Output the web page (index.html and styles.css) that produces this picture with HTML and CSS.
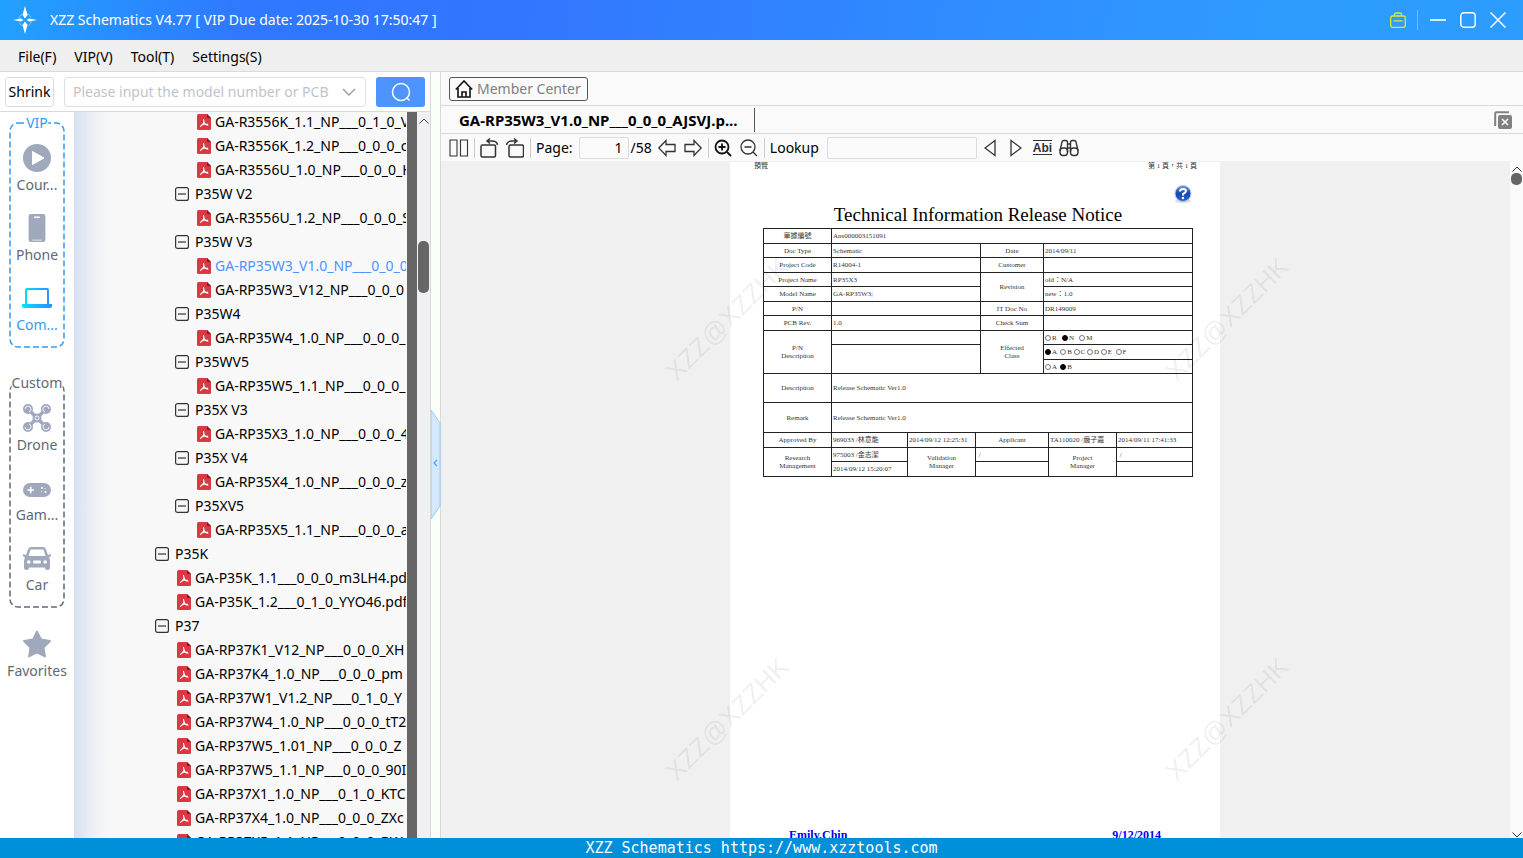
FILE: index.html
```html
<!DOCTYPE html>
<html lang="en">
<head>
<meta charset="utf-8">
<title>XZZ Schematics</title>
<link rel="stylesheet" href="styles.css">
</head>
<body>
<svg class="defs" aria-hidden="true">
  <symbol id="pdf" viewBox="0 0 14 16">
    <path d="M1.500 0H10L14 4V14.500Q14 16 12.500 16H1.500Q0 16 0 14.500V1.500Q0 0 1.500 0Z" fill="#d73a42"/>
    <path d="M10 0L14 4H11Q10 4 10 3Z" fill="#8e1219"/>
    <path d="M6.500 5.500C7.800 8 7 10 3.500 12.300M6.800 8C7.500 10 9 11 11 11M4.500 11.300C6 10.300 8.500 9.800 10.500 10.300" fill="none" stroke="#fff" stroke-width="1.100" stroke-linecap="round"/>
  </symbol>
  <symbol id="minus" viewBox="0 0 14 14">
    <rect x="0.600" y="0.600" width="12.800" height="12.800" rx="2" fill="none" stroke="#333" stroke-width="1.200"/>
    <path d="M3 7H11" stroke="#333" stroke-width="1.200"/>
  </symbol>
</svg>
<div class="app">
  <header class="titlebar">
    <svg class="logo" viewBox="0 0 24 28">
      <circle cx="12" cy="14" r="6.500" fill="none" stroke="#7fc8ff" stroke-width="1" stroke-dasharray="7 3"/>
      <path d="M12 0L14.500 9L12 12.500L9.500 9ZM12 28L14.500 19L12 15.500L9.500 19ZM0 14L8 12.500L10.500 14L8 15.500ZM24 14L16 12.500L13.500 14L16 15.500Z" fill="#fff"/>
    </svg>
    <h1 class="title">XZZ Schematics V4.77 [ VIP Due date: 2025-10-30 17:50:47 ]</h1>
    <div class="window-buttons">
      <button class="win bag" aria-label="Store"><svg viewBox="0 0 16 16" fill="none" stroke="#e2e532" stroke-width="1.300"><rect x="0.700" y="4" width="14.600" height="11.300" rx="2"/><path d="M4.500 4V2.700Q4.500 1 6 1H10Q11.500 1 11.500 2.700V4M3.500 8.800H12.500"/></svg></button>
      <button class="win" aria-label="Minimize"><svg viewBox="0 0 16 16"><path d="M0 8H16" stroke="#fff" stroke-width="1.600"/></svg></button>
      <button class="win" aria-label="Maximize"><svg viewBox="0 0 16 16"><rect x="0.800" y="0.800" width="14.400" height="14.400" rx="3" fill="none" stroke="#fff" stroke-width="1.400"/></svg></button>
      <button class="win" aria-label="Close"><svg viewBox="0 0 16 16"><path d="M0.500 0.500L15.500 15.500M15.500 0.500L0.500 15.500" stroke="#fff" stroke-width="1.500"/></svg></button>
    </div>
  </header>

  <nav class="menubar">
    <button>File(F)</button><button>VIP(V)</button><button>Tool(T)</button><button>Settings(S)</button>
  </nav>

  <main class="body">
    <section class="left">
      <div class="searchbar">
        <button class="shrink">Shrink</button>
        <label class="combo">
          <input type="text" placeholder="Please input the model number or PCB" aria-label="Model number">
          <svg viewBox="0 0 14 8"><path d="M1 1L7 7L13 1" fill="none" stroke="#999ca3" stroke-width="1.400"/></svg>
        </label>
        <button class="search" aria-label="Search"><svg viewBox="0 0 20 20" fill="none" stroke="#fff" stroke-width="1.500"><circle cx="10" cy="10" r="8.500"/><path d="M15.500 15.500L18.500 18.500"/></svg></button>
      </div>
      <div class="left-body">
        <nav class="sidebar">
          <div class="group vip">
            <svg class="frame"><rect x="1" y="1" rx="8"/></svg>
            <span class="legend">VIP</span>
            <button class="side"><svg viewBox="0 0 28 28"><circle cx="14" cy="14" r="14" fill="#a0a8bc"/><path d="M9.500 7.500V20.500L21 14Z" fill="#fff" stroke="#fff" stroke-linejoin="round"/></svg>Cour...</button>
            <button class="side"><svg viewBox="0 0 28 30"><rect x="5" y="0" width="18" height="30" rx="2.500" fill="#a0a8bc"/><path d="M11.500 3.500H16.500" stroke="#fff" stroke-width="1.800" stroke-linecap="round"/><path d="M9 28H19" stroke="#fff" stroke-width="0.800"/></svg>Phone</button>
            <button class="side active"><svg viewBox="0 0 30 20"><defs><linearGradient id="lap"><stop offset="0" stop-color="#00e5ff"/><stop offset="1" stop-color="#2f8bff"/></linearGradient></defs><path fill-rule="evenodd" d="M5 0H25Q27 0 27 2V16H30V18Q30 20 28 20H2Q0 20 0 18V16H3V2Q3 0 5 0ZM5 2V16H25V2Z" fill="url(#lap)"/></svg>Com...</button>
          </div>
          <div class="group custom">
            <svg class="frame"><rect x="1" y="1" rx="8"/></svg>
            <span class="legend">Custom</span>
            <button class="side"><svg viewBox="0 0 28 28"><g fill="#a0a8bc"><circle cx="5" cy="5" r="5"/><circle cx="23" cy="5" r="5"/><circle cx="5" cy="23" r="5"/><circle cx="23" cy="23" r="5"/></g><path d="M5 5L23 23M23 5L5 23" stroke="#a0a8bc" stroke-width="3.500"/><circle cx="14" cy="14" r="4.500" fill="#a0a8bc"/><g fill="none" stroke="#fff" stroke-width="0.900"><path d="M2 5A3 3 0 1 1 6 8M26 5A3 3 0 1 0 22 8M2 23A3 3 0 1 0 6 20M26 23A3 3 0 1 1 22 20"/><circle cx="14" cy="14" r="2"/></g></svg>Drone</button>
            <button class="side"><svg viewBox="0 0 28 28"><rect y="9" width="28" height="14" rx="7" fill="#a0a8bc"/><path d="M4.500 16H11M7.750 12.750V19.250" stroke="#fff" stroke-width="1.700"/><g fill="#fff"><circle cx="19" cy="14" r="1"/><circle cx="22.500" cy="18" r="1"/><circle cx="18.500" cy="17.500" r="0.600"/><circle cx="22" cy="14.500" r="0.600"/></g></svg>Gam...</button>
            <button class="side"><svg viewBox="0 0 28 28"><path fill-rule="evenodd" d="M8 3H20Q22 3 22.800 5L25 11L28 10V12L26 13.500Q27 14.500 27 17V24Q27 26 24.500 26Q22 26 22 23.500H6Q6 26 3.500 26Q1 26 1 24V17Q1 14.500 2 13.500L0 12V10L3 11L5.200 5Q6 3 8 3ZM7.500 5.500L5.500 12H22.500L20.500 5.500Z" fill="#a0a8bc"/><g fill="#fff"><circle cx="5.800" cy="18" r="1.800"/><circle cx="22.200" cy="18" r="1.800"/><rect x="10" y="16.500" width="8" height="3" rx="1"/></g></svg>Car</button>
          </div>
          <button class="side favorites"><svg viewBox="0 0 28 28"><path d="M14 1.500L18 9.500L27 11L20.500 17.500L22 26.500L14 22.500L6 26.500L7.500 17.500L1 11L10 9.500Z" fill="#a0a8bc" stroke="#a0a8bc" stroke-width="1.800" stroke-linejoin="round"/></svg>Favorites</button>
        </nav>
        <ul class="tree">
          <li class="file deep"><svg><use href="#pdf"/></svg>GA-R3556K_1.1_NP___0_1_0_V</li>
          <li class="file deep"><svg><use href="#pdf"/></svg>GA-R3556K_1.2_NP___0_0_0_c</li>
          <li class="file deep"><svg><use href="#pdf"/></svg>GA-R3556U_1.0_NP___0_0_0_H</li>
          <li class="dir deep"><svg><use href="#minus"/></svg>P35W V2</li>
          <li class="file deep"><svg><use href="#pdf"/></svg>GA-R3556U_1.2_NP___0_0_0_S</li>
          <li class="dir deep"><svg><use href="#minus"/></svg>P35W V3</li>
          <li class="file deep current"><svg><use href="#pdf"/></svg>GA-RP35W3_V1.0_NP___0_0_0</li>
          <li class="file deep"><svg><use href="#pdf"/></svg>GA-RP35W3_V12_NP___0_0_0</li>
          <li class="dir deep"><svg><use href="#minus"/></svg>P35W4</li>
          <li class="file deep"><svg><use href="#pdf"/></svg>GA-RP35W4_1.0_NP___0_0_0_</li>
          <li class="dir deep"><svg><use href="#minus"/></svg>P35WV5</li>
          <li class="file deep"><svg><use href="#pdf"/></svg>GA-RP35W5_1.1_NP___0_0_0_</li>
          <li class="dir deep"><svg><use href="#minus"/></svg>P35X V3</li>
          <li class="file deep"><svg><use href="#pdf"/></svg>GA-RP35X3_1.0_NP___0_0_0_4</li>
          <li class="dir deep"><svg><use href="#minus"/></svg>P35X V4</li>
          <li class="file deep"><svg><use href="#pdf"/></svg>GA-RP35X4_1.0_NP___0_0_0_z</li>
          <li class="dir deep"><svg><use href="#minus"/></svg>P35XV5</li>
          <li class="file deep"><svg><use href="#pdf"/></svg>GA-RP35X5_1.1_NP___0_0_0_a</li>
          <li class="dir"><svg><use href="#minus"/></svg>P35K</li>
          <li class="file"><svg><use href="#pdf"/></svg>GA-P35K_1.1___0_0_0_m3LH4.pd</li>
          <li class="file"><svg><use href="#pdf"/></svg>GA-P35K_1.2___0_1_0_YYO46.pdf</li>
          <li class="dir"><svg><use href="#minus"/></svg>P37</li>
          <li class="file"><svg><use href="#pdf"/></svg>GA-RP37K1_V12_NP___0_0_0_XH</li>
          <li class="file"><svg><use href="#pdf"/></svg>GA-RP37K4_1.0_NP___0_0_0_pm</li>
          <li class="file"><svg><use href="#pdf"/></svg>GA-RP37W1_V1.2_NP___0_1_0_Y</li>
          <li class="file"><svg><use href="#pdf"/></svg>GA-RP37W4_1.0_NP___0_0_0_tT2</li>
          <li class="file"><svg><use href="#pdf"/></svg>GA-RP37W5_1.01_NP___0_0_0_Z</li>
          <li class="file"><svg><use href="#pdf"/></svg>GA-RP37W5_1.1_NP___0_0_0_90I</li>
          <li class="file"><svg><use href="#pdf"/></svg>GA-RP37X1_1.0_NP___0_1_0_KTC</li>
          <li class="file"><svg><use href="#pdf"/></svg>GA-RP37X4_1.0_NP___0_0_0_ZXc</li>
          <li class="file"><svg><use href="#pdf"/></svg>GA-RP37X5_1.1_NP___0_0_0_BW</li>
        </ul>
        <div class="strip"></div>
        <div class="scroll">
          <svg class="arrow" viewBox="0 0 10 6"><path d="M0.500 5.500L5 1L9.500 5.500" fill="none" stroke="#444"/></svg>
          <div class="thumb"></div>
        </div>
      </div>
    </section>

    <div class="splitter">
      <button class="collapse" aria-label="Collapse panel"><svg viewBox="0 0 10 110"><path d="M0 0L9 13V96L0 109Z" fill="#d4e9fd" stroke="#90caf9"/><path d="M6 50L3 53L6 56" fill="none" stroke="#4da3f5" stroke-width="1.200"/></svg></button>
    </div>

    <section class="right">
      <div class="top-row">
        <button class="member"><svg viewBox="0 0 18 18" fill="none" stroke="#111" stroke-width="1.600"><path d="M0.800 9.500L9 1L17.200 9.500M3 8V17H15V8M7 17V12H11V17"/></svg>Member Center</button>
      </div>
      <div class="tab-row">
        <button class="tab">GA-RP35W3_V1.0_NP___0_0_0_AJSVJ.p...</button>
        <button class="close-all" aria-label="Close all"><svg viewBox="0 0 18 18"><path d="M1.200 15V2.500Q1.200 1.200 2.500 1.200H15" fill="none" stroke="#808080" stroke-width="2"/><rect x="4" y="4" width="14" height="14" rx="2" fill="#808080"/><path d="M8 8L14 14M14 8L8 14" stroke="#fff" stroke-width="1.600"/></svg></button>
      </div>
      <div class="toolbar">
        <button class="tool two" aria-label="Two pages"><svg viewBox="0 0 20 18" fill="none" stroke="#333" stroke-width="1.100"><path d="M1 1H8V17H1ZM11.500 1H18.500V17H11.500Z"/></svg></button>
        <span class="sep"></span>
        <button class="tool" aria-label="Rotate left"><svg class="rot" viewBox="0 0 18 20" fill="none" stroke="#333" stroke-width="1.500"><rect x="1" y="7" width="14.500" height="12" rx="1.500"/><path d="M17.500 7Q17 3 12 3H7M10 0.500L7 3L10 5.500"/></svg></button>
        <button class="tool" aria-label="Rotate right"><svg class="rot" viewBox="0 0 18 20" fill="none" stroke="#333" stroke-width="1.500"><rect x="3" y="7" width="14.500" height="12" rx="1.500"/><path d="M0.500 7Q1 3 6 3H11M8 0.500L11 3L8 5.500"/></svg></button>
        <span class="sep"></span>
        <label class="page-label" for="pg">Page:</label>
        <input id="pg" class="page-input" type="text" value="1">
        <span class="total">/58</span>
        <button class="tool" aria-label="Previous page"><svg viewBox="0 0 18 18" fill="none" stroke="#333" stroke-width="1.300"><path d="M0.800 9L8 1.500V5.500H17V12.500H8V16.500Z"/></svg></button>
        <button class="tool" aria-label="Next page"><svg viewBox="0 0 18 18" fill="none" stroke="#333" stroke-width="1.300"><path d="M17.200 9L10 1.500V5.500H1V12.500H10V16.500Z"/></svg></button>
        <span class="sep"></span>
        <button class="tool" aria-label="Zoom in"><svg viewBox="0 0 18 18" fill="none" stroke="#111" stroke-width="1.800"><circle cx="8" cy="8" r="6.500"/><path d="M13 13L17 17M4.500 8H11.500M8 4.500V11.500"/></svg></button>
        <button class="tool" aria-label="Zoom out"><svg viewBox="0 0 18 18" fill="none" stroke="#333" stroke-width="1.300"><circle cx="8" cy="8" r="7"/><path d="M13 13L17 17M4.500 8H11.500"/></svg></button>
        <span class="sep"></span>
        <label for="look">Lookup</label>
        <input id="look" class="look-input" type="text">
        <button class="tool small" aria-label="Find previous"><svg viewBox="0 0 12 18" fill="none" stroke="#333" stroke-width="1.300"><path d="M11 1.500V16.500L1 9Z"/></svg></button>
        <button class="tool small" aria-label="Find next"><svg viewBox="0 0 12 18" fill="none" stroke="#333" stroke-width="1.300"><path d="M1 1.500V16.500L11 9Z"/></svg></button>
        <button class="tool abi">Abi</button>
        <button class="tool" aria-label="Find"><svg class="bino" viewBox="0 0 20 18" fill="none" stroke="#333" stroke-width="1.400"><path d="M1 12L3 3Q3.200 1.500 5 1.500H6.500Q8.500 1.500 8.500 3.500V13M19 12L17 3Q16.800 1.500 15 1.500H13.500Q11.500 1.500 11.500 3.500V13M8.500 5H11.500M8.500 9H11.500"/><rect x="1" y="9" width="7.500" height="7.500" rx="3"/><rect x="11.500" y="9" width="7.500" height="7.500" rx="3"/></svg></button>
      </div>
      <div class="viewer">
        <div class="canvas">
          <article class="sheet">
            <div class="sheet-head"><span>預覽</span><span>第 1 頁，共 1 頁</span></div>
            <svg class="help" viewBox="0 0 20 20"><defs><linearGradient id="hb" x2="0" y2="1"><stop offset="0" stop-color="#6d95e0"/><stop offset="0.500" stop-color="#1646b0"/><stop offset="1" stop-color="#2a66d8"/></linearGradient></defs><ellipse cx="10" cy="17" rx="8" ry="2" fill="#ddd"/><circle cx="10" cy="9.500" r="8" fill="url(#hb)" stroke="#b9c8e4"/><path d="M7 7.500Q7 5 10 5Q13 5 13 7Q13 8.500 10 10V11.500" fill="none" stroke="#fff" stroke-width="2"/><circle cx="10" cy="14" r="1.200" fill="#fff"/></svg>
            <h2>Technical Information Release Notice</h2>
            <table class="info">
              <colgroup><col class="c-name"><col><col class="c-mid"><col class="c-val"></colgroup>
              <tr><th>單據編號</th><td colspan="3">Ans000003151091</td></tr>
              <tr><th>Doc Type</th><td>Schematic</td><th>Date</th><td>2014/09/11</td></tr>
              <tr><th>Project Code</th><td>R14004-1</td><th>Customer</th><td></td></tr>
              <tr><th>Project Name</th><td>RP35X3</td><th rowspan="2">Revision</th><td>old：N/A</td></tr>
              <tr><th>Model Name</th><td>GA-RP35W3;</td><td>new：1.0</td></tr>
              <tr><th>P/N</th><td></td><th>IT Doc No</th><td>DR149009</td></tr>
              <tr><th>PCB Rev.</th><td>1.0</td><th>Check Sum</th><td></td></tr>
              <tr><th rowspan="3">P/N<br>Description</th><td></td><th rowspan="3">Effected<br>Class</th><td class="opts"><i></i>R &nbsp; <i class="on"></i>N &nbsp; <i></i>M</td></tr>
              <tr><td rowspan="2"></td><td class="opts"><i class="on"></i>A &nbsp;<i></i>B <i></i>C <i></i>D <i></i>E &nbsp;<i></i>F</td></tr>
              <tr><td class="opts"><i></i>A &nbsp;<i class="on"></i>B</td></tr>
              <tr class="tall"><th>Description</th><td colspan="3">Release Schematic Ver1.0</td></tr>
              <tr class="tall"><th>Remark</th><td colspan="3">Release Schematic Ver1.0</td></tr>
            </table>
            <table class="info sign">
              <colgroup><col class="c-name"><col class="c-date"><col class="c-name"><col><col class="c-name"><col class="c-date"></colgroup>
              <tr><th>Approved By</th><td>969033 /林意能</td><td>2014/09/12 12:25:31</td><th>Applicant</th><td>TA110020 /嚴子嘉</td><td>2014/09/11 17:41:33</td></tr>
              <tr><th rowspan="2">Research<br>Management</th><td>975003 /金志潔</td><th rowspan="2">Validation<br>Manager</th><td>&nbsp;/</td><th rowspan="2">Project<br>Manager</th><td>&nbsp;/</td></tr>
              <tr><td>2014/09/12 15:20:07</td><td></td><td></td></tr>
            </table>
            <div class="sheet-foot"><span>Emily.Chin</span><span>9/12/2014</span></div>
          </article>
          <span class="mark m1">XZZ@XZZHK</span>
          <span class="mark m2">XZZ@XZZHK</span>
          <span class="mark m3">XZZ@XZZHK</span>
          <span class="mark m4">XZZ@XZZHK</span>
        </div>
        <div class="vscroll">
          <svg class="arrow" viewBox="0 0 10 6"><path d="M0.500 5.500L5 1L9.500 5.500" fill="none" stroke="#333"/></svg>
          <div class="knob"></div>
          <svg class="arrow down" viewBox="0 0 10 6"><path d="M0.500 0.500L5 5L9.500 0.500" fill="none" stroke="#333"/></svg>
        </div>
      </div>
    </section>
  </main>
  <footer class="footer">XZZ Schematics https://www.xzztools.com</footer>
</div>
</body>
</html>
```

FILE: styles.css
```css
* { box-sizing: border-box; }
body { margin: 0; font: 14px/20px "Noto Sans", "Noto Sans CJK SC", sans-serif; color: #000; }
button, input { font: inherit; color: inherit; }
button { margin: 0; padding: 0; border: 0; background: none; }
.defs { position: absolute; width: 0; height: 0; }
.app { display: flex; flex-direction: column; height: 100vh; overflow: hidden; }

.titlebar { flex: none; height: 40px; display: flex; align-items: center; padding: 0 17px 0 13px; background: linear-gradient(100deg, #21a2ff 0, #2f78ff 240px, #3275ff 500px, #2e9bff 1250px, #2b9dff 100%); color: #fff; }
.logo { width: 24px; height: 28px; margin-right: 13px; }
.title { margin: 0; font-size: 14px; font-weight: 400; flex: 1; }
.window-buttons { display: flex; align-items: center; gap: 14px; }
.win { display: flex; }
.win svg { width: 16px; height: 16px; }
.bag { padding-right: 11px; margin-right: -2px; border-right: 1px solid #6fb8ff; height: 20px; align-items: center; }

.menubar { flex: none; height: 32px; display: flex; gap: 18px; padding: 2px 18px 0; background: #efefef; border-bottom: 1px solid #d9d9d9; }

.body { flex: 1; min-height: 0; display: flex; }
.left { flex: none; width: 430px; display: flex; flex-direction: column; background: #fff; }
.searchbar { flex: none; height: 40px; display: flex; align-items: center; padding: 0 5px; border-bottom: 1px solid #d9d9d9; }
.shrink { width: 49px; height: 30px; border: 1px solid #dcdcdc; border-radius: 3px; margin-right: 10px; background: #fff; }
.combo { flex: 1; height: 30px; display: flex; align-items: center; border: 1px solid #dcdfe6; border-radius: 3px; padding: 0 9px 0 8px; margin-right: 10px; }
.combo input { flex: 1; min-width: 0; border: 0; padding: 0; outline: 0; background: none; }
.combo input::placeholder { color: #bfc3cb; }
.combo svg { width: 14px; height: 8px; }
.search { width: 49px; height: 30px; border-radius: 3px; background: #4d94ff; display: flex; align-items: center; justify-content: center; }
.search svg { width: 20px; height: 20px; }

.left-body { flex: 1; min-height: 0; display: flex; }
.sidebar { width: 74px; display: flex; flex-direction: column; align-items: center; padding-top: 10px; overflow: hidden; color: #606879; }
.group { position: relative; width: 56px; height: 226px; padding-top: 21px; margin-bottom: 34px; }
.frame { position: absolute; inset: 0; width: 100%; height: 100%; }
.frame rect { width: calc(100% - 2px); height: calc(100% - 2px); fill: none; stroke-width: 1.5px; stroke-dasharray: 6 3; stroke: #606879; }
.vip .frame rect { stroke: #3399f3; }
.legend { position: absolute; top: -9px; left: 50%; transform: translateX(-50%); background: #fff; }
.vip .legend { color: #3399f3; }
.side { position: relative; display: flex; flex-direction: column; align-items: center; justify-content: center; width: 100%; height: 52px; gap: 2px; }
.group .side { margin-bottom: 18px; }
.side svg { width: 30px; height: 30px; padding: 1px; }
.side.active svg { padding: 0; }
.side.active { color: #3399f3; }
.favorites { margin-top: -13px; }

.tree { flex: 1; min-width: 0; margin: 0; padding: 0 0 0 81px; list-style: none; overflow: hidden; background: linear-gradient(90deg, #d6e0f2 0, #eceff5 18px, #f8f8f8 36px); }
.tree li { height: 24px; display: flex; align-items: center; white-space: nowrap; }
.tree li:first-child { margin-top: -2px; }
.tree svg { flex: none; width: 14px; height: 14px; margin-right: 6px; }
.tree .file { padding-left: 22px; }
.tree .file svg { height: 16px; margin-right: 4px; }
.tree .deep { padding-left: 20px; }
.tree .file.deep { padding-left: 42px; }
.tree .current { color: #4d94ff; }
.strip { width: 11px; background: #666; border-left: 1px solid #f8f8f8; }
.scroll { width: 13px; background: #f0f0f2; display: flex; flex-direction: column; align-items: center; padding-top: 6px; }
.arrow { width: 10px; height: 6px; flex: none; }
.thumb { width: 11px; height: 52px; margin-top: 117px; border-radius: 5px; background: #666; }

.splitter { flex: none; width: 11px; border: 1px solid #d9d9d9; border-width: 0 1px; background: #fafffa; display: flex; align-items: center; }
.collapse svg { display: block; width: 10px; height: 110px; }
.collapse { margin-top: 20px; }

.right { flex: 1; min-width: 0; display: flex; flex-direction: column; background: #fafafa; }
.top-row { flex: none; height: 34px; display: flex; align-items: center; padding-left: 8px; border-bottom: 1px solid #d9d9d9; }
.member { height: 24px; display: flex; align-items: center; gap: 4px; padding: 0 6px 0 5px; border: 1px solid #555; border-radius: 3px; color: #808080; }
.member svg { width: 18px; height: 18px; }
.tab-row { flex: none; height: 28px; display: flex; align-items: center; justify-content: space-between; padding-right: 11px; border-bottom: 1px solid #d9d9d9; }
.tab { font-weight: 700; font-size: 15px; padding: 0 16px 0 18px; border-right: 1px solid #555; height: 24px; }
.close-all svg { width: 18px; height: 18px; display: block; }
.toolbar { flex: none; height: 27px; display: flex; align-items: center; padding-left: 8px; }
.tool { display: flex; margin-right: 8px; }
.tool svg { width: 18px; height: 18px; }
.tool .rot { height: 20px; }
.tool.two { margin-right: 7px; }
.tool.two svg { width: 20px; }
.sep { width: 1px; height: 20px; background: #ccc; margin: 0 5px 0 -2px; }
.page-input, .look-input { height: 22px; border: 1px solid #dcdcdc; border-radius: 2px; background: #fafafa; padding: 0 5px; }
.page-input { width: 50px; text-align: right; margin: 0 2px 0 6px; }
.total { margin-right: 6px; }
.look-input { width: 150px; margin: 0 7px 0 8px; }
.tool.small { margin-right: 14px; }
.tool.small svg { width: 12px; }
.tool.abi { font: 700 12px/12px "Liberation Sans", sans-serif; color: #333; border: 1px solid #333; border-width: 1px 0; height: 15px; align-items: center; margin: 0 7px 0 -3px; }
.tool .bino { width: 20px; }

.viewer { flex: 1; min-height: 0; display: flex; }
.canvas { position: relative; flex: 1; overflow: hidden; background: #f0f0f0; display: flex; justify-content: center; padding: 1px 1px 0 0; }
.sheet { width: 490px; flex: none; background: #fff; font: 7px/8px "Liberation Serif", "Noto Sans CJK TC", serif; color: #333; padding: 0 27px 0 33px; }
.sheet-head { display: flex; justify-content: space-between; margin: 0 -4px 0 -9px; }
.help { display: block; width: 20px; height: 20px; margin: 14px 0 0 auto; }
.sheet h2 { margin: 0 0 2px; font-size: 19px; line-height: 22px; font-weight: 400; text-align: center; color: #000; }
.info { width: 430px; border-collapse: collapse; table-layout: fixed; }
.c-name { width: 68px; }
.c-mid { width: 63px; }
.c-val { width: 149px; }
.c-date { width: 76px; }
.info th, .info td { border: 1px solid #222; padding: 0 1px; font-weight: 400; white-space: nowrap; }
.info td { text-align: left; }
.info tr { height: 15px; }
.info tr:nth-child(even) { height: 14px; }
.info .tall, .info .tall:nth-child(even) { height: 29px; }
.info .tall:last-child { height: 30px; }
.sign { margin-top: -1px; }
.opts i { display: inline-block; width: 6px; height: 6px; border: 1px solid #777; border-radius: 3px; vertical-align: -1px; margin-right: 1px; }
.opts .on { background: #000; border-color: #000; }
.sheet-foot { display: flex; justify-content: space-between; margin: 350px 32px 0 26px; font: 700 12px/16px "Liberation Serif", serif; color: #00f; }
.mark { position: absolute; font: 26px/30px "Liberation Sans", sans-serif; color: rgba(0, 0, 0, 0.08); transform: translate(-50%, -50%) rotate(-45deg); }
.m1 { left: 286px; top: 158px; }
.m2 { left: 786px; top: 158px; }
.m3 { left: 286px; top: 558px; }
.m4 { left: 786px; top: 558px; }
.vscroll { width: 13px; background: #fafafa; display: flex; flex-direction: column; align-items: center; padding-top: 5px; }
.knob { width: 11px; height: 12px; margin-top: 1px; border-radius: 5px; background: #666; }
.down { margin-top: auto; }

.footer { flex: none; height: 20px; background: #0090da; color: #fff; text-align: center; font: 15px/20px "DejaVu Sans Mono", monospace; }
```
